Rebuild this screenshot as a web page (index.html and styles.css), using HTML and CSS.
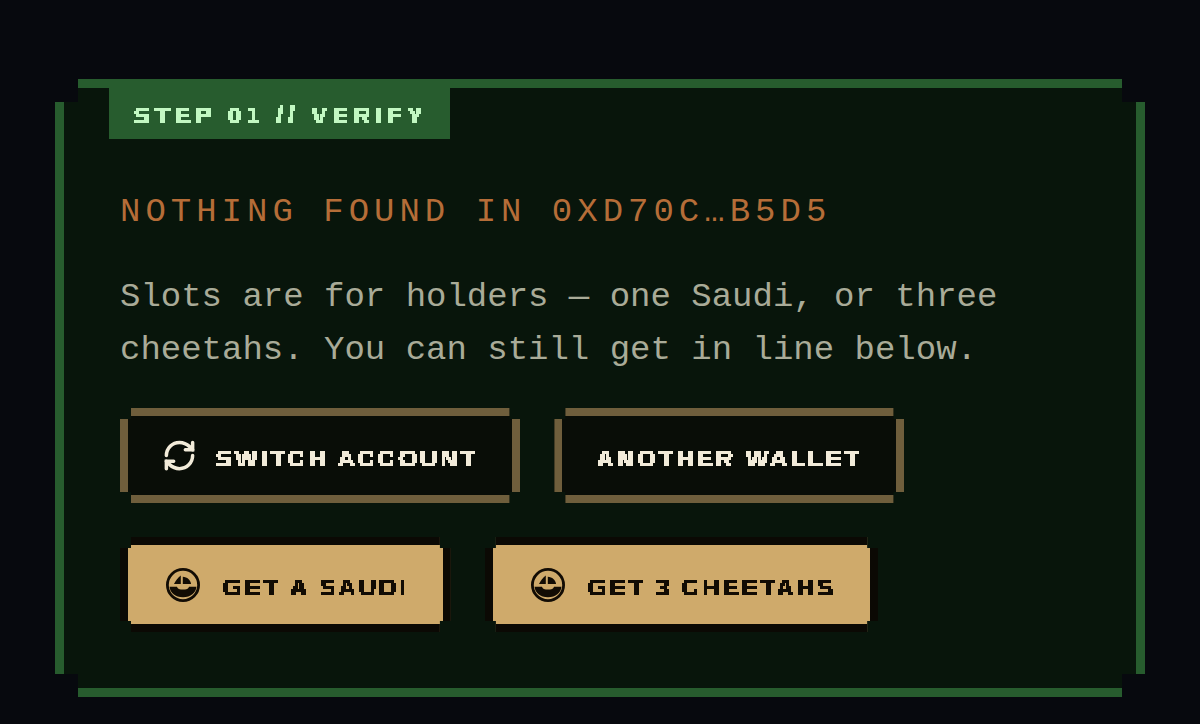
FILE: index.html
```html
<!DOCTYPE html>
<html lang="en">
<head>
    <meta charset="UTF-8">
    <meta name="viewport" content="width=device-width, initial-scale=1.0">
    <title>Step 01 // Verify</title>
    <link rel="stylesheet" href="styles.css">
</head>
<body>

    <!-- Shared icons and the pixel text filter -->
    <svg class="defs" width="0" height="0" aria-hidden="true">
        <filter id="pixelate" x="0" y="0" width="100%" height="100%" color-interpolation-filters="sRGB">
            <feFlood x="1" y="2" width="1" height="1" flood-color="#000"/>
            <feComposite width="2" height="3"/>
            <feTile result="grid"/>
            <feComposite in="SourceGraphic" in2="grid" operator="in"/>
            <feMorphology operator="dilate" radius="1"/>
            <feComponentTransfer>
                <feFuncA type="discrete" tableValues="0 1 1"/>
            </feComponentTransfer>
        </filter>
        <symbol id="boat" viewBox="0 0 42 42">
            <circle cx="21" cy="21" r="15.6" fill="none" stroke="currentColor" stroke-width="2.8"/>
            <path fill="currentColor" d="M18.8 11.5V20h-6.800c1.800-3.500 3.900-6.300 6.800-8.500zM20.800 12.700c4.400.3 7.800 3.200 8.300 7.300h-8.300z"/>
            <path fill="currentColor" d="M7.500 22.800h7.500c.6 1.800 2 2.700 4 2.700h4c2 0 3.400-.9 4-2.700h7.500c-.7 6.300-5.800 10.400-13.500 10.400S8.200 29.100 7.500 22.800z"/>
        </symbol>
    </svg>

    <main class="panel">
        <div class="tab"><span class="pixel">STEP 01 // VERIFY</span></div>

        <div class="content">
            <h1>NOTHING FOUND IN 0XD70C…B5D5</h1>
            <p>Slots are for holders — one Saudi, or three cheetahs. You can still get in line below.</p>

            <div class="actions">
                <button type="button" class="btn">
                    <svg class="icon" viewBox="0 0 24 24" fill="none" stroke="currentColor" stroke-width="2.400" stroke-linecap="round" aria-hidden="true">
                        <path d="M3 12a9 9 0 0 1 9-9 9.750 9.750 0 0 1 6.740 2.740L21 8"/>
                        <path d="M21 3v5h-5"/>
                        <path d="M21 12a9 9 0 0 1-9 9 9.750 9.750 0 0 1-6.740-2.740L3 16"/>
                        <path d="M8 16H3v5"/>
                    </svg>
                    <span class="pixel">SWITCH ACCOUNT</span>
                </button>
                <button type="button" class="btn"><span class="pixel">ANOTHER WALLET</span></button>
                <a href="#saudi" class="btn btn-gold">
                    <svg class="icon-boat" aria-hidden="true"><use href="#boat"/></svg>
                    <span class="pixel">GET A SAUDI</span>
                </a>
                <a href="#cheetahs" class="btn btn-gold">
                    <svg class="icon-boat" aria-hidden="true"><use href="#boat"/></svg>
                    <span class="pixel">GET 3 CHEETAHS</span>
                </a>
            </div>
        </div>
    </main>

</body>
</html>
```

FILE: styles.css
```css
* {
    box-sizing: border-box;
}

body {
    margin: 0;
    padding: 79px 55px 26px;
    background-color: #07090e;
    color: #a9ab98;
    font-family: 'Liberation Mono', monospace;
}

.defs {
    position: absolute;
}

/* Panel with square notches cut out of its corners */
.panel {
    border: 9px solid #275c2e;
    background-color: #08150b;
    clip-path: polygon(23px 0, calc(100% - 23px) 0, calc(100% - 23px) 23px, 100% 23px, 100% calc(100% - 23px), calc(100% - 23px) calc(100% - 23px), calc(100% - 23px) 100%, 23px 100%, 23px calc(100% - 23px), 0 calc(100% - 23px), 0 23px, 23px 23px);
}

.tab {
    display: flex;
    align-items: center;
    width: fit-content;
    height: 51px;
    margin-left: 45px;
    padding: 4px 22px 0 25px;
    background-color: #275c2e;
    color: #c2f8c2;
}

.pixel {
    font-family: 'Liberation Sans', sans-serif;
    font-size: 24px;
    font-weight: bold;
    line-height: 30px;
    letter-spacing: 3px;
    white-space: nowrap;
    filter: url(#pixelate);
}

.tab .pixel {
    letter-spacing: 5px;
}

.content {
    padding: 47px 56px 56px;
}

h1,
p {
    margin: 0;
    font-size: 34px;
    font-weight: normal;
    line-height: 53px;
}

h1 {
    margin-bottom: 32px;
    color: #b56d38;
    letter-spacing: 5px;
}

p {
    margin-bottom: 31px;
}

/* Buttons */
.actions {
    display: flex;
    flex-wrap: wrap;
    gap: 34px;
}

.btn {
    display: flex;
    align-items: center;
    gap: 19px;
    height: 95px;
    padding: 0 34px;
    border: 8px solid #6f5e3c;
    background-color: #090d07;
    color: #f2ebd9;
    text-decoration: none;
    cursor: pointer;
    clip-path: polygon(11px 0, calc(100% - 11px) 0, calc(100% - 11px) 11px, 100% 11px, 100% calc(100% - 11px), calc(100% - 11px) calc(100% - 11px), calc(100% - 11px) 100%, 11px 100%, 11px calc(100% - 11px), 0 calc(100% - 11px), 0 11px, 11px 11px);
}

.btn-gold {
    border-color: #0b0904;
    background-color: #cfaa6b;
    color: #120c04;
}

.btn .pixel {
    padding-top: 6px;
}

.icon {
    width: 35px;
    height: 35px;
}

.icon-boat {
    width: 42px;
    height: 42px;
}
```
